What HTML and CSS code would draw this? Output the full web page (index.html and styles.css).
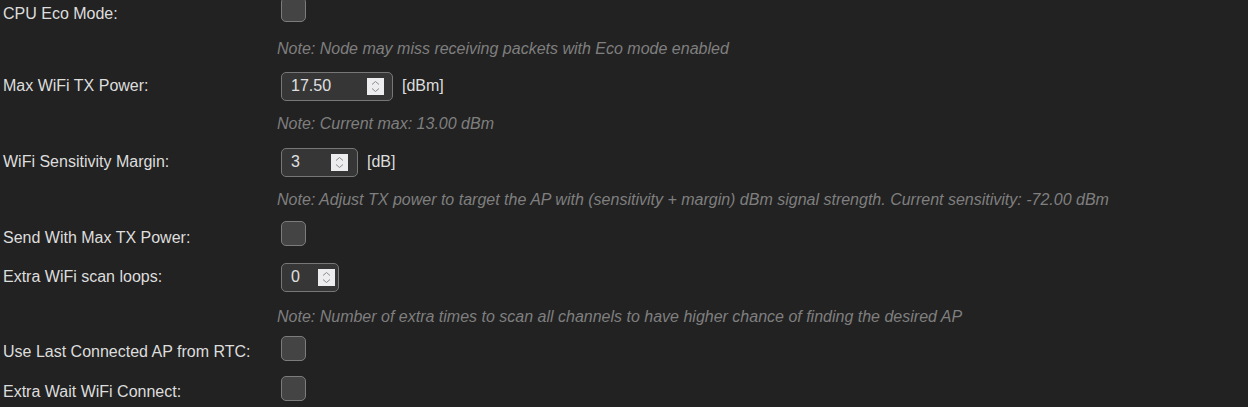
FILE: index.html
```html
<!DOCTYPE html>
<html>
<head>
<meta charset="utf-8">
<link rel="stylesheet" href="styles.css">
</head>
<body>
<div class="settings">
  <div class="row h35">
    <div class="label">CPU Eco Mode:</div>
    <div class="field"><span class="checkbox"></span></div>
  </div>
  <div class="row h36">
    <div class="label"></div>
    <div class="field note">Note: Node may miss receiving packets with Eco mode enabled</div>
  </div>
  <div class="row h38">
    <div class="label">Max WiFi TX Power:</div>
    <div class="field">
      <div class="num num-wide"><span class="val">17.50</span><span class="spin"><svg width="17" height="17" viewBox="0 0 17 17"><polyline points="5,6.5 8.5,3.5 12,6.5" /><polyline points="5,10.5 8.5,13.5 12,10.5" /></svg></span></div>
      <span class="unit">[dBm]</span>
    </div>
  </div>
  <div class="row h38">
    <div class="label"></div>
    <div class="field note">Note: Current max: 13.00 dBm</div>
  </div>
  <div class="row h38">
    <div class="label">WiFi Sensitivity Margin:</div>
    <div class="field">
      <div class="num num-mid"><span class="val">3</span><span class="spin"><svg width="17" height="17" viewBox="0 0 17 17"><polyline points="5,6.5 8.5,3.5 12,6.5" /><polyline points="5,10.5 8.5,13.5 12,10.5" /></svg></span></div>
      <span class="unit">[dB]</span>
    </div>
  </div>
  <div class="row h38">
    <div class="label"></div>
    <div class="field note">Note: Adjust TX power to target the AP with (sensitivity + margin) dBm signal strength. Current sensitivity: -72.00 dBm</div>
  </div>
  <div class="row h37">
    <div class="label">Send With Max TX Power:</div>
    <div class="field"><span class="checkbox"></span></div>
  </div>
  <div class="row h42">
    <div class="label">Extra WiFi scan loops:</div>
    <div class="field">
      <div class="num num-narrow"><span class="val">0</span><span class="spin"><svg width="17" height="17" viewBox="0 0 17 17"><polyline points="5,6.5 8.5,3.5 12,6.5" /><polyline points="5,10.5 8.5,13.5 12,10.5" /></svg></span></div>
    </div>
  </div>
  <div class="row h38">
    <div class="label"></div>
    <div class="field note">Note: Number of extra times to scan all channels to have higher chance of finding the desired AP</div>
  </div>
  <div class="row h32">
    <div class="label">Use Last Connected AP from RTC:</div>
    <div class="field"><span class="checkbox"></span></div>
  </div>
  <div class="row h48">
    <div class="label">Extra Wait WiFi Connect:</div>
    <div class="field"><span class="checkbox"></span></div>
  </div>
</div>
</body>
</html>
```
FILE: styles.css
```css
html, body {
  margin: 0;
  padding: 0;
  background: #222222;
}

body {
  font-family: "Liberation Sans", Arial, sans-serif;
  font-size: 16px;
  color: #dddddd;
  overflow: hidden;
}

.settings {
  display: flex;
  flex-direction: column;
  margin-top: -4px;
}

.row {
  display: flex;
  align-items: center;
}

.h32 { height: 32px; }
.h35 { height: 35px; }
.h36 { height: 36px; }
.h37 { height: 37px; }
.h38 { height: 38px; }
.h42 { height: 42px; }
.h48 { height: 48px; }

.label {
  width: 274px;
  padding-left: 3px;
  flex: none;
  white-space: nowrap;
}

.field {
  display: flex;
  align-items: center;
  white-space: nowrap;
}

.note {
  font-style: italic;
  color: #7f7f7f;
}

.checkbox {
  display: block;
  box-sizing: border-box;
  width: 25px;
  height: 25px;
  margin: 0 0 8px 4px;
  border: 1px solid #7c7c7c;
  border-radius: 5px;
  background: #444444;
}

.num {
  box-sizing: border-box;
  height: 29px;
  margin-left: 4px;
  display: flex;
  align-items: center;
  justify-content: space-between;
  padding-left: 9px;
  border: 1px solid #777777;
  border-radius: 5px;
  background: #363636;
  color: #e0e0e0;
}

.num-wide { width: 112px; padding-right: 8px; }
.num-mid { width: 77px; padding-right: 9px; }
.num-narrow { width: 58px; padding-right: 3px; }

.spin {
  display: block;
  width: 17px;
  height: 17px;
  background: #ededf0;
}

.spin svg {
  display: block;
}

.spin polyline {
  fill: none;
  stroke: #8a8a8a;
  stroke-width: 1;
}

.unit {
  margin-left: 9px;
}
```
